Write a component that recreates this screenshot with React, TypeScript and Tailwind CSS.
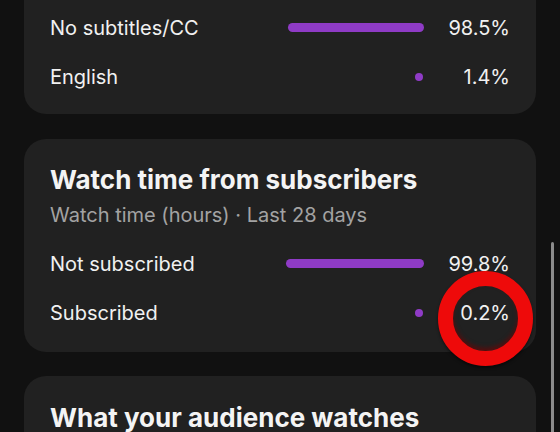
import React from "react";

interface Row {
  label: string;
  value: string;
  pct: number; // bar width in px, 0 means dot only
}

const subtitleRows: Row[] = [
  { label: "No subtitles/CC", value: "98.5%", pct: 136 },
  { label: "English", value: "1.4%", pct: 0 },
];

const subscriberRows: Row[] = [
  { label: "Not subscribed", value: "99.8%", pct: 138 },
  { label: "Subscribed", value: "0.2%", pct: 0 },
];

const BarRow = ({ label, value, pct }: Row) => (
  <div className="flex items-center h-[49px]">
    <span className="flex-1 text-[20px] text-[#f1f1f1]">{label}</span>
    <div className="w-[138px] flex justify-end">
      {pct > 0 ? (
        <div
          className="h-[9px] rounded-full bg-[#8f3bc6]"
          style={{ width: pct }}
        />
      ) : (
        <div className="w-[8px] h-[8px] rounded-full bg-[#8f3bc6] mr-[1px]" />
      )}
    </div>
    <span className="w-[86px] text-right text-[20px] text-[#f1f1f1]">
      {value}
    </span>
  </div>
);

const App = () => {
  return (
    <div
      className="relative w-[560px] h-[432px] overflow-hidden bg-[#111111]"
      style={{ fontFamily: "Inter, 'Noto Sans', sans-serif" }}
    >
      <div className="flex flex-col px-[24px]">
        {/* Subtitles card (scrolled off the top) */}
        <div className="mt-[-40px] pt-[43px] pb-[13px] px-[26px] rounded-[22px] bg-[#212121]">
          {subtitleRows.map((r) => (
            <BarRow key={r.label} {...r} />
          ))}
        </div>

        {/* Watch time from subscribers */}
        <div className="mt-[25px] pt-[25px] pb-[15px] px-[26px] rounded-[22px] bg-[#212121]">
          <h2 className="text-[26px] leading-[32px] font-bold text-[#f4f4f4]">
            Watch time from subscribers
          </h2>
          <p className="mt-[6px] text-[20px] leading-[26px] text-[#a3a3a3]">
            Watch time (hours) · Last 28 days
          </p>
          <div className="mt-[11px]">
            {subscriberRows.map((r) => (
              <BarRow key={r.label} {...r} />
            ))}
          </div>
        </div>

        {/* What your audience watches */}
        <div className="mt-[24px] pt-[26px] pb-[40px] px-[26px] rounded-[22px] bg-[#212121]">
          <h2 className="text-[26px] leading-[32px] font-bold text-[#f4f4f4]">
            What your audience watches
          </h2>
        </div>
      </div>

      {/* scrollbar */}
      <div className="absolute right-[6px] top-[242px] w-[3px] h-[210px] rounded-full bg-[#8c8c8c]" />

      {/* red annotation circle */}
      <div className="absolute left-[438px] top-[271px] w-[95px] h-[95px] rounded-full border-[15px] border-[#ee0a0a] shadow-[inset_0_-3px_4px_rgba(120,0,0,0.6),0_2px_3px_rgba(0,0,0,0.5)]" />
    </div>
  );
};

export default App;
